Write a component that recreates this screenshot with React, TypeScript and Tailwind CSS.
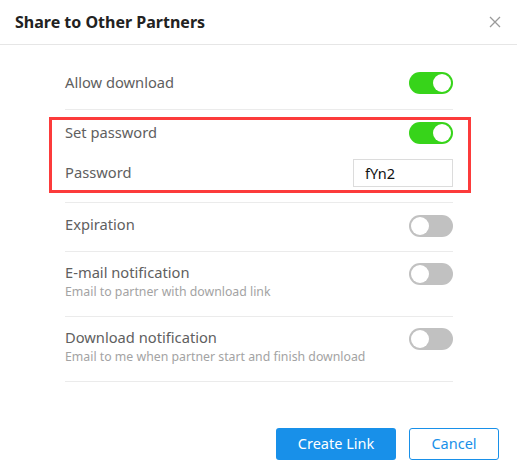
import { useState } from 'react'

interface ToggleProps {
  on: boolean
  onChange: (v: boolean) => void
}

function Toggle({ on, onChange }: ToggleProps) {
  return (
    <button
      type="button"
      onClick={() => onChange(!on)}
      className={`relative h-[22px] w-[44px] shrink-0 rounded-full transition-colors ${on ? 'bg-[#37d41a]' : 'bg-[#c1c1c1]'}`}
    >
      <span
        className={`absolute top-[2px] h-[18px] w-[18px] rounded-full bg-white transition-all ${on ? 'left-[24px]' : 'left-[2px]'}`}
      />
    </button>
  )
}

export default function App() {
  const [allowDownload, setAllowDownload] = useState(true)
  const [setPassword, setSetPassword] = useState(true)
  const [expiration, setExpiration] = useState(false)
  const [emailNotify, setEmailNotify] = useState(false)
  const [downloadNotify, setDownloadNotify] = useState(false)
  const [password, setPasswordValue] = useState('fYn2')

  return (
    <div className="w-[517px] h-[474px] bg-white font-['Noto_Sans',sans-serif]">
      {/* Header */}
      <div className="flex h-[45px] items-center justify-between border-b border-[#e6e6e6] pl-[15px] pr-[16px]">
        <h2 className="text-[16px] font-bold text-[#222] leading-none">Share to Other Partners</h2>
        <button type="button" className="text-[#9a9a9a]" aria-label="Close">
          <svg width="12" height="12" viewBox="0 0 12 12" fill="none" stroke="currentColor" strokeWidth="1.3">
            <path d="M1 1L11 11M11 1L1 11" />
          </svg>
        </button>
      </div>

      {/* Content */}
      <div className="pl-[65px] pr-[64px] pt-[14px]">
        <div className="flex h-[51px] items-start justify-between border-b border-[#ebebeb] pt-[14px]">
          <span className="text-[14.7px] leading-[19px] text-[#606060]">Allow download</span>
          <div className="-mt-[1px]">
            <Toggle on={allowDownload} onChange={setAllowDownload} />
          </div>
        </div>

        {/* Password group */}
        <div className="-ml-[16px] -mr-[18px] mt-[7px] border-[3px] border-[#fc3b3b] pl-[13px] pr-[15px]">
          <div className="flex h-[35px] items-start justify-between pt-[2px]">
            <span className="mt-[1px] text-[14.7px] leading-[19px] text-[#606060]">Set password</span>
            <Toggle on={setPassword} onChange={setSetPassword} />
          </div>
          <div className="flex h-[35px] items-start justify-between">
            <span className="mt-[8px] text-[14.7px] leading-[19px] text-[#606060]">Password</span>
            <input
              value={password}
              onChange={(e) => setPasswordValue(e.target.value)}
              className="mt-[4px] h-[28px] w-[100px] border border-[#dcdcdc] px-[11px] text-[14.5px] text-[#111] outline-none"
            />
          </div>
        </div>

        <div className="mt-[9px] border-t border-[#ebebeb]" />

        <div className="flex h-[49px] items-start justify-between border-b border-[#ebebeb] pt-[12px]">
          <span className="text-[14.7px] leading-[19px] text-[#606060]">Expiration</span>
          <Toggle on={expiration} onChange={setExpiration} />
        </div>

        <div className="flex h-[65px] items-start justify-between border-b border-[#ebebeb] pt-[11px]">
          <div className="flex flex-col">
            <span className="text-[14.7px] leading-[19px] text-[#606060]">E-mail notification</span>
            <span className="mt-[2px] text-[12.3px] leading-[16px] text-[#a3a3a3]">Email to partner with download link</span>
          </div>
          <Toggle on={emailNotify} onChange={setEmailNotify} />
        </div>

        <div className="flex h-[65px] items-start justify-between border-b border-[#ebebeb] pt-[11px]">
          <div className="flex flex-col">
            <span className="text-[14.7px] leading-[19px] text-[#606060]">Download notification</span>
            <span className="mt-[2px] text-[12.3px] leading-[16px] text-[#a3a3a3]">Email to me when partner start and finish download</span>
          </div>
          <Toggle on={downloadNotify} onChange={setDownloadNotify} />
        </div>
      </div>

      {/* Footer */}
      <div className="mt-[46px] flex justify-end gap-[13px] pr-[18px]">
        <button type="button" className="h-[32px] w-[120px] rounded-[3px] bg-[#1890e9] text-[14.5px] text-white">
          Create Link
        </button>
        <button type="button" className="h-[32px] w-[90px] rounded-[3px] border border-[#1890e9] bg-white text-[14.5px] text-[#1890e9]">
          Cancel
        </button>
      </div>
    </div>
  )
}
